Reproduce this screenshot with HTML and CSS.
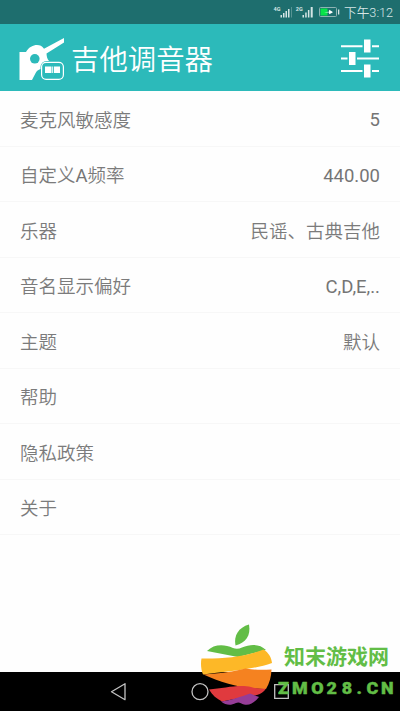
FILE: index.html
```html
<!DOCTYPE html>
<html lang="zh-CN">
<head>
<meta charset="utf-8">
<title>吉他调音器</title>
<link rel="stylesheet" href="styles.css">
</head>
<body>
<div class="screen">
  <div class="status">
    <svg class="status-icons" width="68" height="24" viewBox="272 0 68 24">
      <g fill="#d5e5e5">
        <path d="M280.5 15h1.5v2.500h-1.500zM283 13h1.500v4.500h-1.500zM285.500 11h1.500v6.500h-1.500zM288 9h1.500v8.500h-1.500z"/>
        <path d="M302.500 15h1.500v2.500h-1.500zM305.200 12.500h1.500v5h-1.500zM307.900 10h1.500v7.500h-1.500zM310.700 7h2v10.500h-2z"/>
        <path d="M291 7h.7v10.500h-.7z" opacity=".45"/>
      </g>
      <g class="network"><text x="273.500" y="11">4G</text><text x="295.800" y="11">2G</text></g>
      <rect x="319.500" y="7.500" width="17" height="9" rx="1" fill="none" stroke="#8fb3b3"/>
      <path d="M320.500 8.500h7v7h-7z" fill="#08e349"/>
      <path d="M338 9.500h1.300v5H338z" fill="#d5e5e5"/>
      <path d="M324 12.300l5-.6.200-2 3.300 2 .2.700-3.500 1.800-.2-1.600z" fill="#fff"/>
    </svg>
    <span class="clock">下午3:12</span>
  </div>
  <header class="appbar">
    <svg class="logo" width="46" height="44" viewBox="19 37 46 44">
      <path fill="#fff" d="M19.500 52H26C29 47 33 45 37 45c3 0 5 1 7 3.700L64 38v4.500L46.500 53.500c.2 3 .5 5 2.500 7.500L41 69c-5 1-5 4-9 11H19.500z"/>
      <circle cx="34.800" cy="58.800" r="4.800" fill="#2cbaba"/>
      <rect x="40.500" y="61" width="24" height="20" rx="6" fill="#2cbaba"/>
      <rect x="41.600" y="62.300" width="21.800" height="17" rx="4.500" fill="none" stroke="#fff" stroke-width="1.200"/>
      <path fill="#fff" d="M45 66.500h6.500V73H45zM52.200 66.500h1v6.500h-1zM54 66.500h6V73h-6z"/>
    </svg>
    <h1>吉他调音器</h1>
    <svg class="tune" width="40" height="40" viewBox="340 39 40 40">
      <path d="M341 46.200h21.500M372 46.200h7M341 58.500h6.500M357 58.500h22M341 71h21.500M372 71h7" stroke="#fff" stroke-width="1.900"/>
      <path d="M364 39.500h6.500v13H364zM349 52h6.500v13H349zM364 64.500h6.500v13H364z" fill="#fff"/>
    </svg>
  </header>
  <main class="list">
    <div class="row"><span>麦克风敏感度</span><span class="latin">5</span></div>
    <div class="row"><span>自定义<span class="latin">A</span>频率</span><span class="latin">440.00</span></div>
    <div class="row"><span>乐器</span><span>民谣、古典吉他</span></div>
    <div class="row"><span>音名显示偏好</span><span class="latin">C,D,E,..</span></div>
    <div class="row"><span>主题</span><span>默认</span></div>
    <div class="row"><span>帮助</span></div>
    <div class="row"><span>隐私政策</span></div>
    <div class="row"><span>关于</span></div>
  </main>
  <nav class="navbar">
    <svg width="400" height="39" viewBox="0 672 400 39" fill="none" stroke="#c2c2c2" stroke-width="1.300">
      <path d="M111.500 691.700l13.500-8v16z" stroke-linejoin="round"/>
      <circle cx="200" cy="691.700" r="8"/>
      <path d="M274.700 684.700h13.600v13.600h-13.600z"/>
    </svg>
  </nav>
  <div class="watermark">
    <svg class="apple" width="76" height="84" viewBox="199 623 76 84">
      <path fill="#62bd46" d="M235.500 645.500c-2-10 3-18 13.500-21 2 11-3 18-13.500 21z"/>
      <path fill="#62bd46" d="M207 651c7-7 17-7 26-3 3 1.300 6 1 9-.5 9-4 18-3.500 24 2.500l-28 7z"/>
      <path fill="#fdb827" d="M201.500 658.500c20 .5 45-2 62-9 5 3 8 8 8.500 13.500-20 7-45 8-69 11.500-2-5-2.500-11-1.500-16z"/>
      <path fill="#f58220" d="M203.500 674.500c16-1 31-3 42-6 9 1.700 18 1.500 26 1-.2 7-2 14-5.500 19.500-21 .5-45-6-62.500-14.500z"/>
      <path fill="#e03a3e" d="M209 689.500c15-1.500 31-5.500 42-2.500 5 1.500 10 2 15 1.500-2 3-5 5.500-9 6.500-12 2-23 4-35 6.500-5-2.500-10-6.500-13-12z"/>
      <path fill="#963d97" d="M221 701.500c10-1 20-5 29-8 4 1.500 7 3 9 3.500-4 5-9 9-15 7.500-3-1-5-3-8-1.500-6 3-10 2-15-1.500z"/>
    </svg>
    <div class="brand"><div class="brand-name">知末游戏网</div><svg class="brand-url" width="122" height="18" viewBox="278 679 122 18"><text transform="translate(278 0) scale(1.12 1)" x="0 12.500 29.600 43.300 57 70 79 92" y="693.800">ZMO28.CN</text></svg></div>
  </div>
</div>
</body>
</html>
```
FILE: styles.css
```css
* { box-sizing: border-box; }
body { margin: 0; font-family: Roboto, "Noto Sans CJK SC", sans-serif; }
.screen { position: relative; width: 400px; height: 711px; display: flex; flex-direction: column; overflow: hidden; background: #fefefe; }
.status { height: 24px; display: flex; align-items: center; justify-content: flex-end; padding-right: 8px; gap: 4px; background: #1e6e6e; color: #d5e5e5; }
.clock { width: 48px; font-size: 12.7px; font-weight: 350; line-height: 24px; white-space: nowrap; padding-top: 2px; }
.network text { font: bold 5.5px Roboto, sans-serif; fill: #d5e5e5; }
.appbar { height: 67px; display: flex; align-items: center; padding: 0 20px 0 19px; background: #2cbaba; color: #fff; }
.logo { flex: none; margin-top: 3px; }
.appbar h1 { flex: 1; margin: 6px 0 0 6px; font-size: 28.4px; font-weight: 350; line-height: 40px; }
.tune { flex: none; margin-top: 2px; }
.list { flex: 1; color: #7b7b7b; font-size: 18.5px; font-weight: 350; }
.row { height: 55.55px; padding: 4.5px 20px 0; display: flex; align-items: center; justify-content: space-between; border-bottom: 1px solid #f7f7f7; line-height: 28px; }
.latin { font-weight: 400; color: #757575; }
.row > .latin { margin-top: -1px; }
.navbar { height: 39px; background: #000; }
.navbar svg { display: block; }
.watermark { position: absolute; left: 199px; top: 623px; display: flex; }
.apple { flex: none; }
.brand { padding: 18px 0 0 3px; }
.brand-name { margin-left: 6px; font: 700 21px/28px "Noto Sans CJK SC", sans-serif; color: #62bd46; white-space: nowrap; }
.brand-url { display: block; margin-top: 10px; }
.brand-url text { font: 900 16px Roboto, sans-serif; fill: #62bd46; stroke: #62bd46; stroke-width: .4px; }
```
